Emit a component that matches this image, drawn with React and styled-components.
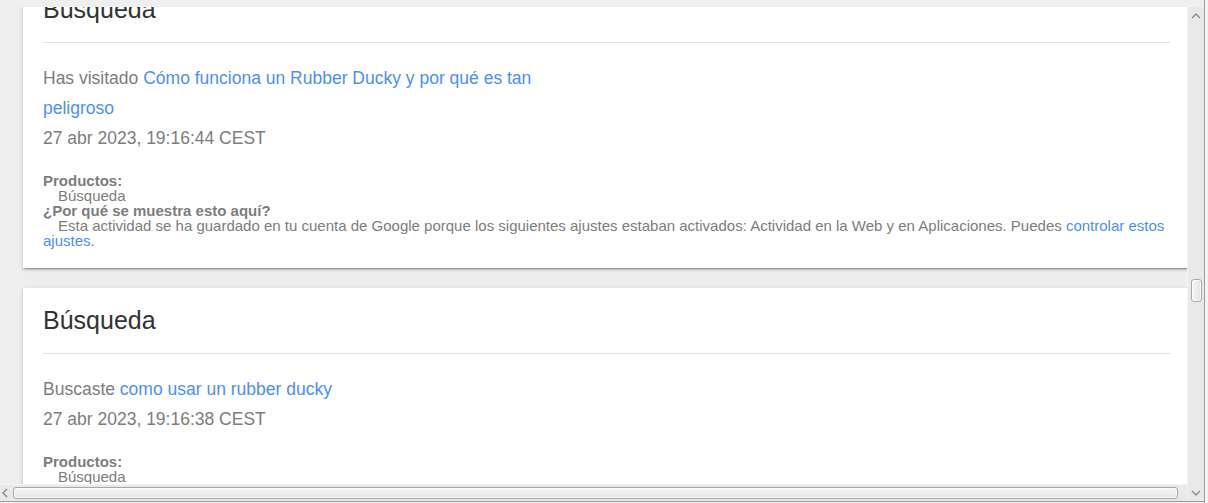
import React, { useLayoutEffect, useRef } from 'react';
import styled, { createGlobalStyle } from 'styled-components';

const GlobalStyle = createGlobalStyle`
  html, body {
    margin: 0;
    padding: 0;
    background: #eeeeee;
    overflow: hidden;
  }
  * {
    box-sizing: border-box;
  }
`;

const activities = [
  {
    id: 1,
    verb: 'Has visitado',
    title: 'Cómo funciona un Rubber Ducky y por qué es tan peligroso',
    date: '27 abr 2023, 19:16:44 CEST',
  },
  {
    id: 2,
    verb: 'Buscaste',
    title: 'como usar un rubber ducky',
    date: '27 abr 2023, 19:16:38 CEST',
  },
];

const Chevron = ({ dir }) => {
  const points = {
    up: '1,6 5,2 9,6',
    down: '1,2 5,6 9,2',
    left: '6,1 2,5 6,9',
  }[dir];
  const box = dir === 'left' ? '0 0 8 10' : '0 0 10 8';
  return (
    <svg width={dir === 'left' ? 8 : 10} height={dir === 'left' ? 10 : 8} viewBox={box}>
      <polyline points={points} fill="none" stroke="#8a8a8a" strokeWidth="1.4" />
    </svg>
  );
};

const ActivityCard = ({ item }) => (
  <Card>
    <HeaderCell>
      <Title>Búsqueda</Title>
    </HeaderCell>
    <ContentCell>
      {item.verb} <Link href="#">{item.title}</Link>
      <br />
      {item.date}
    </ContentCell>
    <ContentCell />
    <CaptionCell>
      <b>Productos:</b>
      <br />
      &emsp;Búsqueda
      <br />
      <b>¿Por qué se muestra esto aquí?</b>
      <br />
      &emsp;Esta actividad se ha guardado en tu cuenta de Google porque los siguientes ajustes
      estaban activados: Actividad en la Web y en Aplicaciones. Puedes{' '}
      <Link href="#">controlar estos ajustes</Link>.
    </CaptionCell>
  </Card>
);

const App = () => {
  const viewRef = useRef(null);

  useLayoutEffect(() => {
    if (viewRef.current) viewRef.current.scrollTop = 31;
  }, []);

  return (
    <>
      <GlobalStyle />
      <Window>
        <Main>
          <TopStrip />
          <Viewport ref={viewRef}>
            <Page>
              {activities.map((item) => (
                <ActivityCard key={item.id} item={item} />
              ))}
            </Page>
          </Viewport>
          <VScroll>
            <ArrowButton>
              <Chevron dir="up" />
            </ArrowButton>
            <VTrack>
              <VThumb $offset={255} />
            </VTrack>
            <ArrowButton>
              <Chevron dir="down" />
            </ArrowButton>
          </VScroll>
          <HScroll>
            <HArrow>
              <Chevron dir="left" />
            </HArrow>
            <HThumb />
          </HScroll>
          <BottomEdge />
        </Main>
        <RightEdge />
      </Window>
    </>
  );
};

export default App;

const Window = styled.div`
  display: flex;
  width: 1208px;
  height: 503px;
  background: #eeeeee;
  font-family: 'Liberation Sans', Arial, Helvetica, sans-serif;
`;

const Main = styled.div`
  flex: 1;
  display: grid;
  grid-template-columns: 1fr 17px;
  grid-template-rows: 7px 1fr 17px 2px;
  min-width: 0;
`;

const TopStrip = styled.div`
  grid-column: 1 / 3;
  background: #efefef;
`;

const Viewport = styled.div`
  overflow: hidden;
  background: #eeeeee;
`;

const Page = styled.div`
  display: flex;
  flex-direction: column;
  gap: 20px;
  padding: 1px 0 40px 23px;
  width: 1213px;
`;

const Card = styled.div`
  display: flex;
  flex-wrap: wrap;
  align-items: flex-start;
  width: 1167px;
  padding: 10px;
  background: #ffffff;
  box-shadow: 0 2px 2px 0 rgba(0, 0, 0, 0.14), 0 3px 1px -2px rgba(0, 0, 0, 0.2),
    0 1px 5px 0 rgba(0, 0, 0, 0.12);
`;

const HeaderCell = styled.div`
  width: calc(100% - 20px);
  margin: 10px;
  border-bottom: 1px solid #e0e0e0;
`;

const Title = styled.p`
  margin: 0 0 20px;
  font-size: 25px;
  line-height: 25px;
  font-weight: 400;
  color: #333333;
`;

const ContentCell = styled.div`
  width: calc(50% - 20px);
  margin: 10px;
  font-size: 17.5px;
  line-height: 30px;
  color: #7d7d7d;
`;

const CaptionCell = styled.div`
  width: calc(100% - 20px);
  margin: 10px;
  font-size: 15px;
  line-height: 15px;
  color: #7d7d7d;

  b {
    font-weight: 700;
  }
`;

const Link = styled.a`
  color: #4d8ff6;
  text-decoration: none;
`;

const VScroll = styled.div`
  grid-column: 2;
  grid-row: 2 / 4;
  display: flex;
  flex-direction: column;
  background: #e9e9e9;
  border-left: 1px solid #f4f4f4;
`;

const ArrowButton = styled.div`
  height: 17px;
  display: flex;
  align-items: center;
  justify-content: center;
`;

const VTrack = styled.div`
  flex: 1;
  display: flex;
  flex-direction: column;
  align-items: center;
`;

const VThumb = styled.div`
  width: 11px;
  height: 23px;
  margin-top: ${(p) => p.$offset}px;
  border: 1px solid #a8a8a8;
  border-radius: 3px;
  background: linear-gradient(to right, #f4f4f4, #e4e4e4);
  box-shadow: inset 0 0 0 1px #fafafa;
`;

const HScroll = styled.div`
  grid-column: 1;
  grid-row: 3;
  display: flex;
  align-items: center;
  background: #e9e9e9;
  border-top: 1px solid #f4f4f4;
`;

const HArrow = styled.div`
  width: 13px;
  display: flex;
  align-items: center;
  justify-content: center;
  padding-right: 3px;
`;

const HThumb = styled.div`
  flex: 1;
  height: 12px;
  margin-right: 9px;
  border: 1px solid #a8a8a8;
  border-radius: 3px;
  background: linear-gradient(to bottom, #f6f6f6, #e6e6e6);
  box-shadow: inset 0 0 0 1px #fafafa;
`;

const BottomEdge = styled.div`
  grid-column: 1 / 3;
  border-top: 1px solid #9e9e9e;
  background: #f0f0f0;
`;

const RightEdge = styled.div`
  width: 4px;
  border-left: 1px solid #9e9e9e;
  background: #f4f4f4;
`;
